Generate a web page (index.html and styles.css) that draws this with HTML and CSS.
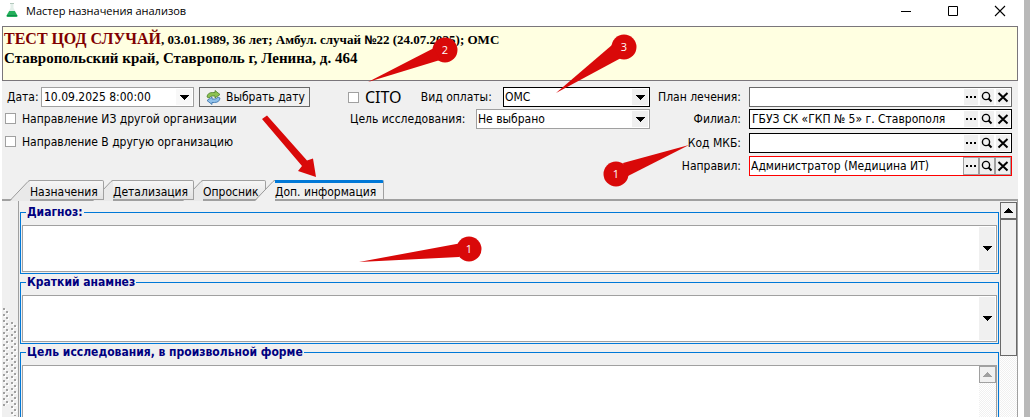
FILE: index.html
```html
<!DOCTYPE html>
<html lang="ru">
<head>
    <meta charset="UTF-8">
    <meta name="viewport" content="width=device-width, initial-scale=1.0">
    <title>Мастер назначения анализов</title>
    <link rel="stylesheet" href="styles.css">
</head>
<body>
    <!-- shared icons -->
    <svg class="sprite" aria-hidden="true">
        <symbol id="i-down" viewBox="0 0 9 5"><path d="M0 0h9v1h-1v1h-1v1h-1v1h-1v1h-1v-1h-1v-1h-1v-1h-1v-1h-1z"/></symbol>
        <symbol id="i-up" viewBox="0 0 9 5"><path d="M0 5h9v-1h-1v-1h-1v-1h-1v-1h-1v-1h-1v1h-1v1h-1v1h-1v1h-1z"/></symbol>
        <symbol id="i-dots" viewBox="0 0 12 12"><path d="M1 5h2v2h-2zM5 5h2v2h-2zM9 5h2v2h-2z"/></symbol>
        <symbol id="i-search" viewBox="0 0 12 12"><circle cx="5" cy="5" r="3.6" fill="none" stroke="#000" stroke-width="1.4"/><path d="M7.5 7.5L10.500 10.500" stroke="#000" stroke-width="2"/></symbol>
        <symbol id="i-clear" viewBox="0 0 12 12"><path d="M1.500 2L10.500 10.500M10.500 2L1.500 10.500" stroke="#000" stroke-width="2" fill="none"/></symbol>
        <symbol id="i-slope" viewBox="0 0 20 21"><path class="fill" d="M0 21L18 1.500Q19 .5 20 .5V21z"/><path d="M0 20.500L18 1.500Q19 .5 20 .5" fill="none" stroke="#9a9a9a"/></symbol>
    </svg>

    <div class="screen">
        <div class="window">
            <header class="titlebar">
                <svg class="logo" width="12" height="14" viewBox="0 0 12 14">
                    <path d="M4.500 0h3v5l4 7.500q.5 1.500-1 1.500h-9q-1.500 0-1-1.500l4-7.500z" fill="#e3efe9"/>
                    <path d="M3.200 8h5.600l2.600 4.600q.4 1.400-.9 1.400h-9q-1.300 0-.9-1.400z" fill="#23b05a"/>
                    <path d="M1 12.500h10" stroke="#0f8a4a"/>
                    <path d="M4 .5h4" stroke="#b5c9be"/>
                </svg>
                <h1>Мастер назначения анализов</h1>
                <button type="button" aria-label="Свернуть"><svg width="12" height="12"><path d="M1 6.500h10" stroke="#000"/></svg></button>
                <button type="button" aria-label="Развернуть"><svg width="12" height="12"><path d="M1.500 1.500h9v9h-9z" fill="none" stroke="#000"/></svg></button>
                <button type="button" aria-label="Закрыть"><svg width="12" height="12"><path d="M1 1L11 11M11 1L1 11" stroke="#000" stroke-width="1.100"/></svg></button>
            </header>

            <section class="patient">
                <p class="case"><strong>ТЕСТ ЦОД СЛУЧАЙ</strong>, 03.01.1989, 36 лет; Амбул. случай <span class="sign">№</span>22 (24.07.2025); ОМС</p>
                <p class="address">Ставропольский край, Ставрополь г, Ленина, д. 464</p>
            </section>

            <form class="fields">
                <div class="col-date">
                    <div class="date-row">
                        <label for="date">Дата:</label>
                        <div class="combo date">
                            <input type="text" id="date" value="10.09.2025 8:00:00">
                            <button type="button" class="drop plain" aria-label="Календарь"><svg width="9" height="5"><use href="#i-down"/></svg></button>
                        </div>
                        <button type="button" class="pick">
                            <svg width="15" height="15" viewBox="0 0 15 15">
                                <path d="M1 7Q1.500 2.500 6.500 2.500H9V0.500L14 4.500L9 8V6H6.500Q4 6 3 8z" fill="#8cc152" stroke="#4d7f2a" stroke-width=".8"/>
                                <path d="M14 8Q13.500 12.500 8.500 12.500H6V14.500L1 10.500L6 7V9H8.500Q11 9 12 7z" fill="#8fc0ea" stroke="#356fa8" stroke-width=".8"/>
                            </svg>
                            Выбрать дату
                        </button>
                    </div>
                    <label class="check"><input type="checkbox">Направление ИЗ другой организации</label>
                    <label class="check"><input type="checkbox">Направление В другую организацию</label>
                </div>

                <div class="col-pay">
                    <div class="row">
                        <label class="check cito"><input type="checkbox">CITO</label>
                        <label class="pay-label" for="pay">Вид оплаты:</label>
                        <div class="combo pay">
                            <select id="pay"><option>ОМС</option></select>
                            <span class="drop"><svg width="9" height="5"><use href="#i-down"/></svg></span>
                        </div>
                    </div>
                    <div class="row">
                        <label for="goal">Цель исследования:</label>
                        <div class="combo goal">
                            <select id="goal"><option>Не выбрано</option></select>
                            <span class="drop"><svg width="9" height="5"><use href="#i-down"/></svg></span>
                        </div>
                    </div>
                </div>

                <div class="col-ref">
                    <label for="plan">План лечения:</label>
                    <div class="lookup grey">
                        <input type="text" id="plan">
                        <button type="button" aria-label="Выбрать"><svg width="12" height="12"><use href="#i-dots"/></svg></button>
                        <button type="button" aria-label="Найти"><svg width="12" height="12"><use href="#i-search"/></svg></button>
                        <button type="button" aria-label="Очистить"><svg width="12" height="12"><use href="#i-clear"/></svg></button>
                    </div>
                    <label for="branch">Филиал:</label>
                    <div class="lookup">
                        <input type="text" id="branch" value="ГБУЗ СК «ГКП № 5» г. Ставрополя">
                        <button type="button" aria-label="Выбрать"><svg width="12" height="12"><use href="#i-dots"/></svg></button>
                        <button type="button" aria-label="Найти"><svg width="12" height="12"><use href="#i-search"/></svg></button>
                        <button type="button" aria-label="Очистить"><svg width="12" height="12"><use href="#i-clear"/></svg></button>
                    </div>
                    <label for="mkb">Код МКБ:</label>
                    <div class="lookup">
                        <input type="text" id="mkb">
                        <button type="button" aria-label="Выбрать"><svg width="12" height="12"><use href="#i-dots"/></svg></button>
                        <button type="button" aria-label="Найти"><svg width="12" height="12"><use href="#i-search"/></svg></button>
                        <button type="button" aria-label="Очистить"><svg width="12" height="12"><use href="#i-clear"/></svg></button>
                    </div>
                    <label for="doctor">Направил:</label>
                    <div class="lookup required">
                        <input type="text" id="doctor" value="Администратор (Медицина ИТ)">
                        <button type="button" aria-label="Выбрать"><svg width="12" height="12"><use href="#i-dots"/></svg></button>
                        <button type="button" aria-label="Найти"><svg width="12" height="12"><use href="#i-search"/></svg></button>
                        <button type="button" aria-label="Очистить"><svg width="12" height="12"><use href="#i-clear"/></svg></button>
                    </div>
                </div>
            </form>

            <nav class="tabs">
                <button type="button" class="tab first"><svg width="20" height="21"><use href="#i-slope"/></svg><span>Назначения</span></button>
                <button type="button" class="tab second"><svg width="20" height="21"><use href="#i-slope"/></svg><span>Детализация</span></button>
                <button type="button" class="tab third"><svg width="20" height="21"><use href="#i-slope"/></svg><span>Опросник</span></button>
                <button type="button" class="tab active"><svg width="20" height="21"><use href="#i-slope"/></svg><span>Доп. информация</span></button>
            </nav>

            <div class="workspace">
                <div class="splitter">
                    <svg width="16" height="110">
                        <defs>
                            <pattern id="grip" width="8" height="6" patternUnits="userSpaceOnUse">
                                <path d="M1 1h2v2h-2zM4 4h2v2h-2z" fill="#fff"/>
                                <path d="M0 0h2v2h-2zM3 3h2v2h-2z" fill="#a0a0a0"/>
                            </pattern>
                        </defs>
                        <rect width="8" height="98" fill="url(#grip)"/>
                        <g transform="translate(8 14)"><rect width="8" height="94" fill="url(#grip)"/></g>
                    </svg>
                </div>
                <div class="panel">
                    <div class="groups">
                        <fieldset>
                            <legend>Диагноз:</legend>
                            <div class="memo">
                                <textarea aria-label="Диагноз"></textarea>
                                <button type="button" class="drop" aria-label="Открыть список"><svg width="9" height="5"><use href="#i-down"/></svg></button>
                            </div>
                        </fieldset>
                        <fieldset>
                            <legend>Краткий анамнез</legend>
                            <div class="memo">
                                <textarea aria-label="Краткий анамнез"></textarea>
                                <button type="button" class="drop" aria-label="Открыть список"><svg width="9" height="5"><use href="#i-down"/></svg></button>
                            </div>
                        </fieldset>
                        <fieldset>
                            <legend>Цель исследования, в произвольной форме</legend>
                            <div class="memo large">
                                <textarea aria-label="Цель исследования"></textarea>
                                <div class="scroll off"><button type="button" class="up" aria-label="Вверх"><svg width="9" height="5"><use href="#i-up"/></svg></button></div>
                            </div>
                        </fieldset>
                    </div>
                    <div class="scroll">
                        <button type="button" class="up" aria-label="Вверх"><svg width="9" height="5"><use href="#i-up"/></svg></button>
                        <div class="thumb"></div>
                    </div>
                </div>
            </div>
        </div>
    </div>

    <!-- numbered callouts over the form -->
    <svg class="callouts" width="1030" height="417">
        <g fill="#d90909">
            <circle cx="445" cy="50" r="12.500"/><path d="M368 82L434 48L440 60z"/>
            <circle cx="624" cy="47" r="12.500"/><path d="M556 93L612 45L621 58z"/>
            <circle cx="616" cy="174" r="12.500"/><path d="M689 145L623 163L628 176z"/>
            <circle cx="469" cy="249" r="12.500"/><path d="M359 262L459 243.500V257z"/>
            <path d="M262 119L267 115.500L307 160.500L313 158.500L316 177L298 171L302 166z"/>
        </g>
        <g class="num">
            <text x="445" y="54">2</text>
            <text x="624" y="51">3</text>
            <text x="616" y="178">1</text>
            <text x="469" y="253">1</text>
        </g>
    </svg>
</body>
</html>
```

FILE: styles.css
```css
* {
    margin: 0;
    padding: 0;
    box-sizing: border-box;
}

body {
    position: relative;
    font-family: 'DejaVu Sans Condensed', 'DejaVu Sans', sans-serif;
    font-size: 12px;
    line-height: 16px;
    color: #000;
    background: #fff;
    overflow: hidden;
}

button,
input,
select,
textarea {
    font: inherit;
    color: inherit;
    background: none;
    border: none;
    border-radius: 0;
    outline: none;
}

svg {
    display: block;
    flex: none;
}

.sprite {
    position: absolute;
    width: 0;
    height: 0;
}

.screen {
    height: 100vh;
    padding: 0 6px 0 2px;
    border-right: 6px solid #b9b9b9;
}

.window {
    display: flex;
    flex-direction: column;
    height: 100%;
    background: #f0f0f0;
}

/* title bar */
.titlebar {
    display: flex;
    align-items: center;
    height: 26px;
    padding: 0 4px;
    background: #fff;
    flex: none;
}

.titlebar h1 {
    flex: 1;
    margin-left: 8px;
    padding-bottom: 4px;
    font: 11px/20px 'Open Sans', sans-serif;
}

.titlebar .logo {
    margin-bottom: 6px;
}

.titlebar button {
    width: 28px;
    margin-left: 19px;
    padding: 0 8px;
    margin-bottom: 4px;
}

/* patient banner */
.patient {
    height: 55px;
    padding: 3px 1px;
    border: 1px solid #7a767b;
    background: #ffffe1;
    font-family: 'Liberation Serif', serif;
    font-weight: bold;
    white-space: nowrap;
    overflow: hidden;
    flex: none;
}

.case {
    font-size: 13px;
    line-height: 18px;
}

.case strong {
    font-size: 16px;
    color: #800000;
}

.case .sign {
    font-family: 'Open Sans', sans-serif;
    font-size: 12px;
    line-height: 1;
}

.address {
    font-size: 15px;
    line-height: 18px;
}

/* form */
.fields {
    display: flex;
    padding: 6px 6px 0 3px;
    height: 99px;
    white-space: nowrap;
    flex: none;
}

.col-date {
    width: 343px;
}

.date-row,
.row {
    display: flex;
    align-items: center;
    height: 20px;
}

.date-row label {
    width: 36px;
    padding-left: 2px;
}

.combo,
.lookup {
    display: flex;
    height: 20px;
    padding: 1px;
    border: 1px solid #a0a0a0;
    background: #fff;
}

.combo.date {
    width: 153px;
}

.combo input,
.combo select,
.lookup input {
    flex: 1;
    min-width: 0;
    padding: 0 1px;
}

.combo select {
    appearance: none;
    padding: 0;
}

.drop {
    display: flex;
    align-items: center;
    justify-content: center;
    width: 16px;
    background: #f0f0f0;
}

.drop.plain {
    background: #f8f8f8;
}

.pick {
    display: flex;
    align-items: center;
    gap: 5px;
    height: 20px;
    margin-left: 5px;
    padding: 0 4px 0 6px;
    border: 1px solid #696969;
}

.check {
    display: flex;
    align-items: center;
    gap: 6px;
    height: 23px;
}

.check input {
    appearance: none;
    width: 11px;
    height: 11px;
    border: 1px solid #a0a0a0;
    background: #fff;
}

.col-pay {
    display: flex;
    flex-direction: column;
    gap: 2px;
    width: 302px;
}

.row {
    justify-content: space-between;
    padding-left: 2px;
}

.check.cito {
    height: 20px;
    margin-left: -2px;
    font-family: 'Noto Sans', sans-serif;
    font-size: 16px;
}

.pay-label {
    margin-left: 8px;
}

.combo.pay {
    width: 147px;
    border-color: #000;
}

.combo.goal {
    width: 174px;
}

.col-ref {
    display: grid;
    grid-template-columns: 94px 1fr;
    grid-template-rows: 22px 24px 23px 20px;
    flex: 1;
    margin-left: 5px;
}

.col-ref label {
    padding-right: 8px;
    text-align: right;
    line-height: 20px;
}

.lookup {
    gap: 2px;
    border-color: #000;
}

.lookup.grey {
    border-color: #696969;
}

.lookup button {
    display: flex;
    align-items: center;
    justify-content: center;
    width: 14px;
    background: #f0f0f0;
}

.lookup.required {
    gap: 0;
    padding: 0;
    border-color: #f00;
}

.lookup.required button {
    width: 16px;
    border: 1px solid #a0a0a0;
}

/* tabs */
.tabs {
    display: flex;
    height: 21px;
    padding-left: 8px;
    border-bottom: 2px solid #a0a0a0;
    flex: none;
}

.tab {
    display: flex;
    height: 21px;
    position: relative;
    fill: #e9e9e9;
}

.tab span {
    flex: 1;
    height: 20px;
    border: solid #a0a0a0;
    border-width: 1px 1px 1px 0;
    border-top-right-radius: 2px;
    background: linear-gradient(#f6f6f6, #e2e2e2);
    line-height: 22px;
    text-align: left;
}

.tab + .tab {
    margin-left: -11px;
}

.tab.first {
    width: 94px;
    z-index: 3;
}

.tab.second {
    width: 101px;
    z-index: 2;
}

.tab.third {
    width: 83px;
    z-index: 1;
}

.tab.active {
    z-index: 4;
    width: 129px;
    fill: #f0f0f0;
}

.tab.active span {
    border-top: 3px solid #0078d7;
    background: #f0f0f0;
    line-height: 18px;
}

/* work area */
.workspace {
    display: flex;
    flex: 1;
    min-height: 0;
    overflow: hidden;
}

.splitter {
    width: 16px;
    padding: 107px 0 0 1px;
    overflow: hidden;
}

.panel {
    display: flex;
    flex: 1;
    padding-top: 1px;
    border: solid #a0a0a0;
    border-width: 0 1px;
    overflow: hidden;
}

.groups {
    flex: 1;
    min-width: 0;
    padding: 2px 1px 0;
}

fieldset {
    padding: 5px 1px 1px;
    border: 1px solid #0078d7;
}

legend {
    margin-left: 4px;
    padding: 0 1px;
    color: #000080;
    font-weight: bold;
}

.memo {
    display: flex;
    height: 47px;
    padding: 1px;
    border: 1px solid #a0a0a0;
    background: #fff;
}

.memo textarea {
    flex: 1;
    resize: none;
}

.memo.large {
    height: 120px;
    padding: 0;
}

.scroll {
    width: 17px;
    background: repeating-conic-gradient(#fff 0 25%, #f0f0f0 0 50%) 0 0 / 2px 2px;
}

.up {
    display: flex;
    align-items: center;
    justify-content: center;
    width: 17px;
    height: 17px;
    border: 1px solid #696969;
    background: #f0f0f0;
}

.thumb {
    height: 137px;
    border: 1px solid #696969;
    background: #f0f0f0;
}

.scroll.off .up {
    border-color: #a0a0a0;
    fill: #a0a0a0;
}

/* callouts */
.callouts {
    position: absolute;
    top: 0;
    left: 0;
    pointer-events: none;
}

.num {
    fill: #fff;
    font: 11px 'Open Sans', sans-serif;
    text-anchor: middle;
}
```
